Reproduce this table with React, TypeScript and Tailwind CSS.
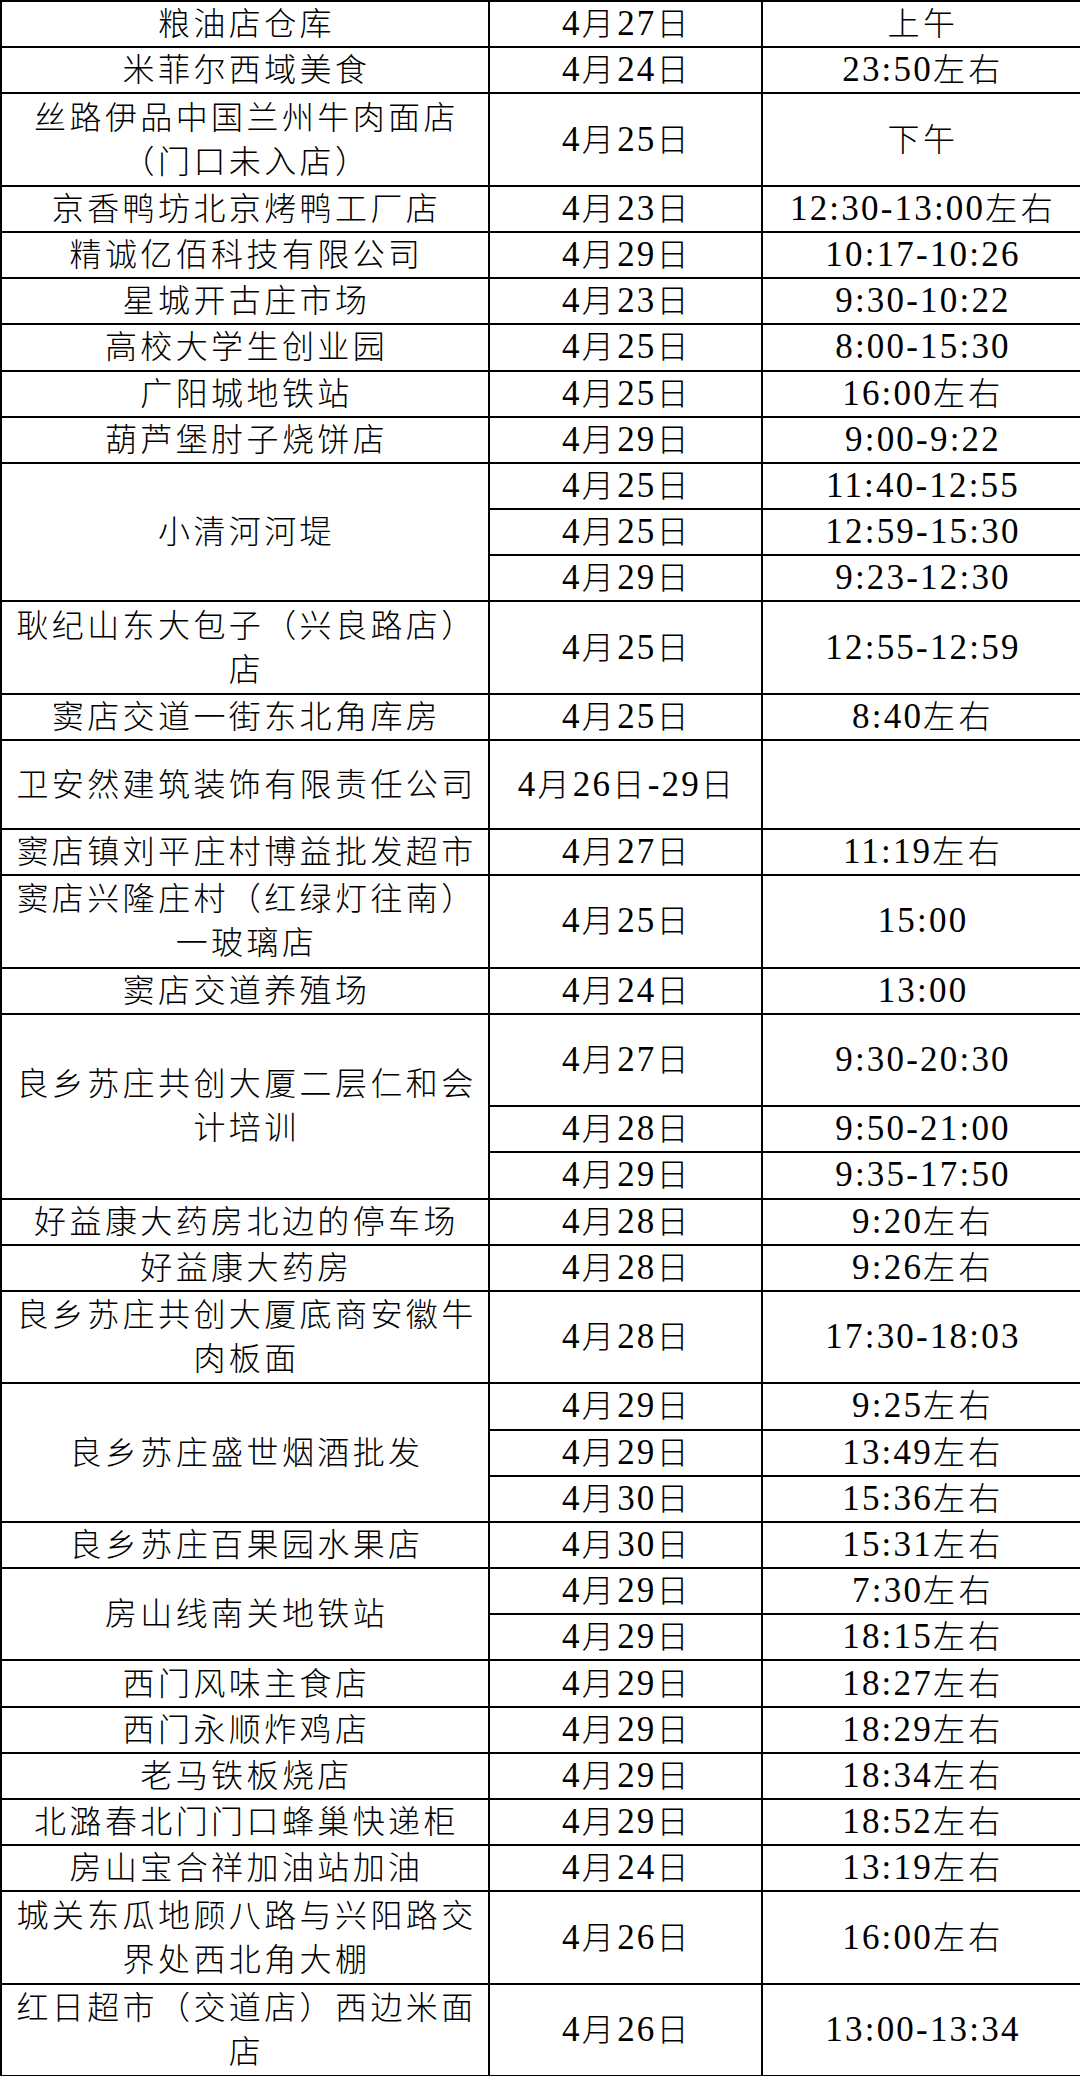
import React from 'react'

interface Slot {
  date: string
  time: string
  h?: string
}

interface Place {
  name: string[]
  slots: Slot[]
}

const ONE = 'h-[46.2px]'
const TWO = 'h-[92.4px]'

const places: Place[] = [
  { name: ['粮油店仓库'], slots: [{ date: '4月27日', time: '上午' }] },
  { name: ['米菲尔西域美食'], slots: [{ date: '4月24日', time: '23:50左右' }] },
  { name: ['丝路伊品中国兰州牛肉面店', '（门口未入店）'], slots: [{ date: '4月25日', time: '下午', h: TWO }] },
  { name: ['京香鸭坊北京烤鸭工厂店'], slots: [{ date: '4月23日', time: '12:30-13:00左右' }] },
  { name: ['精诚亿佰科技有限公司'], slots: [{ date: '4月29日', time: '10:17-10:26' }] },
  { name: ['星城开古庄市场'], slots: [{ date: '4月23日', time: '9:30-10:22' }] },
  { name: ['高校大学生创业园'], slots: [{ date: '4月25日', time: '8:00-15:30' }] },
  { name: ['广阳城地铁站'], slots: [{ date: '4月25日', time: '16:00左右' }] },
  { name: ['葫芦堡肘子烧饼店'], slots: [{ date: '4月29日', time: '9:00-9:22' }] },
  {
    name: ['小清河河堤'],
    slots: [
      { date: '4月25日', time: '11:40-12:55' },
      { date: '4月25日', time: '12:59-15:30' },
      { date: '4月29日', time: '9:23-12:30' },
    ],
  },
  { name: ['耿纪山东大包子（兴良路店）', '店'], slots: [{ date: '4月25日', time: '12:55-12:59', h: TWO }] },
  { name: ['窦店交道一街东北角库房'], slots: [{ date: '4月25日', time: '8:40左右' }] },
  { name: ['卫安然建筑装饰有限责任公司'], slots: [{ date: '4月26日-29日', time: '', h: 'h-[89px]' }] },
  { name: ['窦店镇刘平庄村博益批发超市'], slots: [{ date: '4月27日', time: '11:19左右' }] },
  { name: ['窦店兴隆庄村（红绿灯往南）', '一玻璃店'], slots: [{ date: '4月25日', time: '15:00', h: TWO }] },
  { name: ['窦店交道养殖场'], slots: [{ date: '4月24日', time: '13:00' }] },
  {
    name: ['良乡苏庄共创大厦二层仁和会', '计培训'],
    slots: [
      { date: '4月27日', time: '9:30-20:30', h: TWO },
      { date: '4月28日', time: '9:50-21:00' },
      { date: '4月29日', time: '9:35-17:50' },
    ],
  },
  { name: ['好益康大药房北边的停车场'], slots: [{ date: '4月28日', time: '9:20左右' }] },
  { name: ['好益康大药房'], slots: [{ date: '4月28日', time: '9:26左右' }] },
  { name: ['良乡苏庄共创大厦底商安徽牛', '肉板面'], slots: [{ date: '4月28日', time: '17:30-18:03', h: TWO }] },
  {
    name: ['良乡苏庄盛世烟酒批发'],
    slots: [
      { date: '4月29日', time: '9:25左右' },
      { date: '4月29日', time: '13:49左右' },
      { date: '4月30日', time: '15:36左右' },
    ],
  },
  { name: ['良乡苏庄百果园水果店'], slots: [{ date: '4月30日', time: '15:31左右' }] },
  {
    name: ['房山线南关地铁站'],
    slots: [
      { date: '4月29日', time: '7:30左右' },
      { date: '4月29日', time: '18:15左右' },
    ],
  },
  { name: ['西门风味主食店'], slots: [{ date: '4月29日', time: '18:27左右' }] },
  { name: ['西门永顺炸鸡店'], slots: [{ date: '4月29日', time: '18:29左右' }] },
  { name: ['老马铁板烧店'], slots: [{ date: '4月29日', time: '18:34左右' }] },
  { name: ['北潞春北门门口蜂巢快递柜'], slots: [{ date: '4月29日', time: '18:52左右' }] },
  { name: ['房山宝合祥加油站加油'], slots: [{ date: '4月24日', time: '13:19左右' }] },
  { name: ['城关东瓜地顾八路与兴阳路交', '界处西北角大棚'], slots: [{ date: '4月26日', time: '16:00左右', h: TWO }] },
  { name: ['红日超市（交道店）西边米面', '店'], slots: [{ date: '4月26日', time: '13:00-13:34', h: TWO }] },
]

const cell = 'border-2 border-black p-0 pl-[3px] text-center align-middle whitespace-nowrap'

// digits are drawn a bit larger, like the half-width figures of the original
function Mixed({ text }: { text: string }) {
  const parts = text.split(/([0-9:\-]+)/)
  return (
    <>
      {parts.map((part, i) =>
        /^[0-9:\-]+$/.test(part) ? (
          <span key={i} className="text-[35px] leading-none tracking-[2.2px]">
            {part}
          </span>
        ) : (
          <React.Fragment key={i}>{part}</React.Fragment>
        )
      )}
    </>
  )
}

export default function App() {
  return (
    <div className="w-[1080px] bg-white text-black">
      <table
        className="w-[1080px] table-fixed border-collapse text-[32px] leading-[44px] tracking-[3.4px] font-light"
        style={{ fontFamily: '"Liberation Serif", "Noto Sans CJK SC", serif' }}
      >
        <colgroup>
          <col className="w-[488px]" />
          <col className="w-[273px]" />
          <col className="w-[319px]" />
        </colgroup>
        <tbody>
          {places.map((p, pi) =>
            p.slots.map((s, si) => (
              <tr key={`${pi}-${si}`} className={s.h ?? ONE}>
                {si === 0 && (
                  <td rowSpan={p.slots.length} className={cell}>
                    {p.name.map((line, li) => (
                      <div key={li}>{line}</div>
                    ))}
                  </td>
                )}
                <td className={cell}>
                  <Mixed text={s.date} />
                </td>
                <td className={cell}>
                  <Mixed text={s.time} />
                </td>
              </tr>
            ))
          )}
        </tbody>
      </table>
    </div>
  )
}
